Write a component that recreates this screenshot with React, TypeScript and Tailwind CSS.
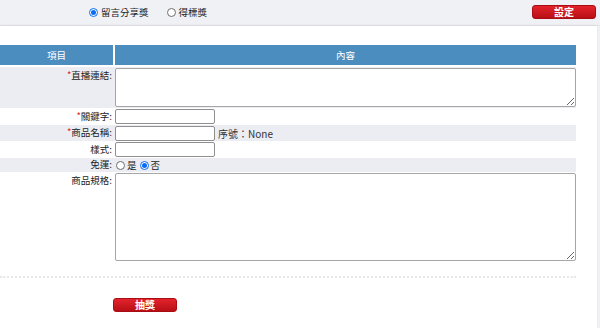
const font = { fontFamily: '"Noto Sans CJK TC", "Noto Sans", sans-serif' };

function Radio({ checked }: { checked?: boolean }) {
  return checked ? (
    <span className="flex h-[9px] w-[9px] shrink-0 items-center justify-center rounded-full border border-[#0a6cf5] bg-white">
      <span className="h-[5px] w-[5px] rounded-full bg-[#0a6cf5]" />
    </span>
  ) : (
    <span className="h-[9px] w-[9px] shrink-0 rounded-full border border-[#6f6f6f] bg-white" />
  );
}

function RedButton({ label, className }: { label: string; className?: string }) {
  return (
    <button
      className={
        "flex h-[14px] w-[64px] items-center justify-center rounded-[3px] border border-[#a80d14] bg-gradient-to-b from-[#e3232c] to-[#b90e16] text-[10px] font-bold leading-none text-white " +
        (className ?? "")
      }
    >
      {label}
    </button>
  );
}

function Label({ text, required }: { text: string; required?: boolean }) {
  return (
    <div className="w-[113px] shrink-0 pr-[1px] text-right text-[9.5px] leading-none text-[#222]">
      {required && <span className="text-[#e02020]">*</span>}
      {text}:
    </div>
  );
}

const inputCls = "h-[15px] w-[100px] rounded-[2px] border border-[#8f8f8f] bg-white";

export default function App() {
  return (
    <div className="h-[328px] w-[600px] overflow-hidden bg-[#f0f1f5]" style={font}>
      {/* top bar */}
      <div className="flex h-[26px] items-center border-b border-[#e3e5ea] pl-[89px] pr-[4px]">
        <label className="flex items-center gap-[3px] text-[9.5px] text-[#222]">
          <Radio checked />
          留言分享獎
        </label>
        <label className="ml-[18px] flex items-center gap-[3px] text-[9.5px] text-[#222]">
          <Radio />
          得標獎
        </label>
        <RedButton label="設定" className="ml-auto mb-[2px]" />
      </div>

      {/* card */}
      <div className="h-[302px] w-[597px] bg-white pt-[19px] shadow-[0_-1px_2px_rgba(0,0,0,0.06)]">
        <div className="w-[576px]">
          <div className="flex h-[20px] gap-[2px] text-[9.5px] text-white">
            <div className="flex w-[113px] items-center justify-center bg-[#4c8dbf]">項目</div>
            <div className="flex flex-1 items-center justify-center bg-[#4c8dbf]">內容</div>
          </div>

          <div className="mt-[2px] flex h-[41px] items-start bg-[#ecedf2] pt-[1px]">
            <div className="pt-[3px]">
              <Label text="直播連結" required />
            </div>
            <textarea className="ml-[2px] h-[39px] w-[461px] rounded-[2px] border border-[#a6a6a6] bg-white" />
          </div>

          <div className="flex h-[17px] items-center">
            <Label text="關鍵字" required />
            <input className={"ml-[2px] " + inputCls} />
          </div>

          <div className="flex h-[16px] items-center bg-[#ecedf2]">
            <Label text="商品名稱" required />
            <input className={"ml-[2px] " + inputCls} />
            <span className="ml-[3px] text-[10px] text-[#333]">序號：None</span>
          </div>

          <div className="flex h-[17px] items-center">
            <Label text="樣式" />
            <input className={"ml-[2px] " + inputCls} />
          </div>

          <div className="flex h-[14px] items-center bg-[#ecedf2] text-[9.5px] text-[#222]">
            <Label text="免運" />
            <span className="ml-[3px] flex items-center gap-[2px]">
              <Radio />是
            </span>
            <span className="ml-[3px] flex items-center gap-[2px]">
              <Radio checked />否
            </span>
          </div>

          <div className="flex h-[90px] items-start pt-[1px]">
            <div className="pt-[3px]">
              <Label text="商品規格" />
            </div>
            <textarea className="ml-[2px] h-[88px] w-[461px] rounded-[2px] border border-[#a6a6a6] bg-white" />
          </div>

          <div className="mt-[14px] border-t-2 border-dotted border-[#e8e8ea]" />

          <div className="mt-[20px] pl-[113px]">
            <RedButton label="抽獎" />
          </div>
        </div>
      </div>
    </div>
  );
}
